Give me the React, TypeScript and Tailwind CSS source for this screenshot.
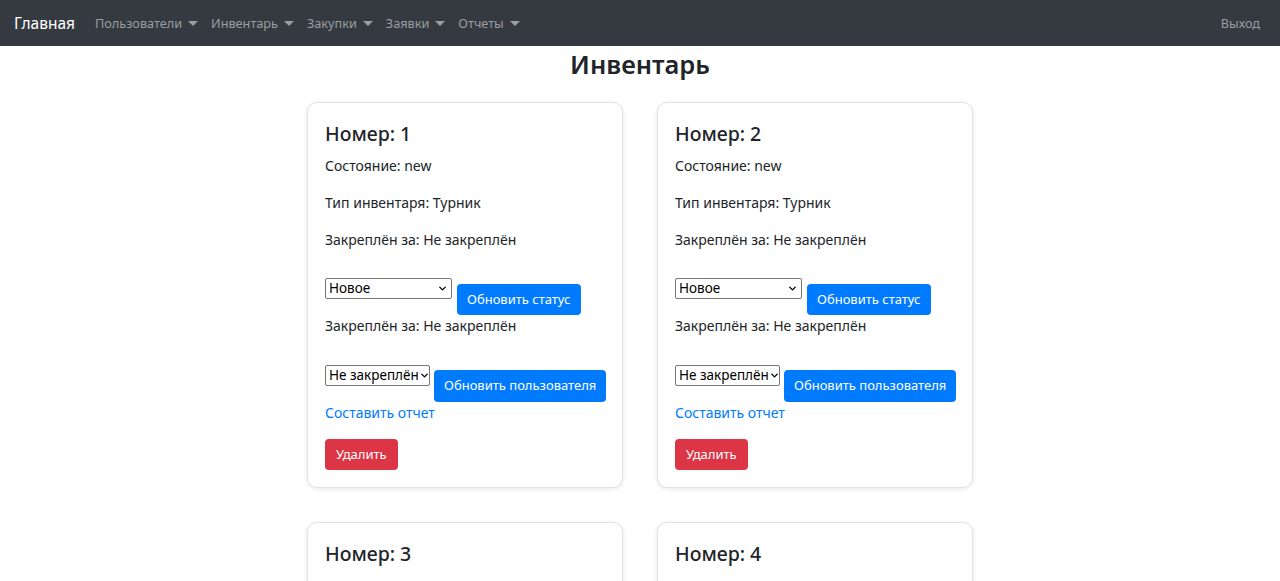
import { ChevronDown } from 'lucide-react';

interface Item {
  id: number;
  state: string;
  type: string;
  owner: string;
}

const items: Item[] = [
  { id: 1, state: 'new', type: 'Турник', owner: 'Не закреплён' },
  { id: 2, state: 'new', type: 'Турник', owner: 'Не закреплён' },
  { id: 3, state: 'new', type: 'Турник', owner: 'Не закреплён' },
  { id: 4, state: 'new', type: 'Турник', owner: 'Не закреплён' },
];

const navLinks = ['Пользователи', 'Инвентарь', 'Закупки', 'Заявки', 'Отчеты'];

function Caret() {
  return (
    <svg width="10" height="6" viewBox="0 0 10 6" className="ml-[6px] mt-[1px]">
      <path d="M0 0 L10 0 L5 5 Z" fill="currentColor" />
    </svg>
  );
}

function FakeSelect({ value, width }: { value: string; width: string }) {
  return (
    <div
      className={`${width} h-[21px] flex items-center justify-between border border-[#767676] rounded-[2px] bg-white pl-[3px] pr-[3px] text-[13.5px] text-black shrink-0 whitespace-nowrap`}
    >
      <span className="leading-none">{value}</span>
      <ChevronDown className="w-[11px] h-[11px] shrink-0" strokeWidth={3} />
    </div>
  );
}

function Card({ item }: { item: Item }) {
  return (
    <div className="bg-white border border-[#e2e2e2] rounded-[10px] shadow-[0_1px_5px_rgba(0,0,0,0.1)] px-[17px] pt-[17px] pb-[17px]">
      <h3 className="text-[19.5px] font-medium leading-[28px] text-[#212529] mb-[7px]">Номер: {item.id}</h3>
      <p className="text-[14px] leading-[21px] mb-[16px]">Состояние: {item.state}</p>
      <p className="text-[14px] leading-[21px] mb-[16px]">Тип инвентаря: {item.type}</p>
      <p className="text-[14px] leading-[21px] mb-[16px]">Закреплён за: {item.owner}</p>
      <div className="flex items-start gap-[5px] pt-[12px]">
        <FakeSelect value="Новое" width="w-[127px]" />
        <button className="mt-[6px] h-[31px] px-[10px] rounded-[4px] bg-[#007bff] text-white text-[13px] whitespace-nowrap">
          Обновить статус
        </button>
      </div>
      <p className="text-[14px] leading-[21px] mb-[16px]">Закреплён за: {item.owner}</p>
      <div className="flex items-start gap-[4px] pt-[13px]">
        <FakeSelect value="Не закреплён" width="w-[105px]" />
        <button className="mt-[5px] h-[32px] px-[10px] rounded-[4px] bg-[#007bff] text-white text-[13px] whitespace-nowrap">
          Обновить пользователя
        </button>
      </div>
      <a href="#" className="block text-[14px] leading-[21px] mb-[16px] text-[#007bff]">
        Составить отчет
      </a>
      <button className="h-[31px] px-[11px] rounded-[4px] bg-[#dc3545] text-white text-[13px]">Удалить</button>
    </div>
  );
}

export default function App() {
  return (
    <div className="min-h-screen bg-white text-[#212529]" style={{ fontFamily: '"Noto Sans", "Open Sans", sans-serif' }}>
      <nav className="h-[46px] bg-[#343a40] flex items-center px-[14px] pt-[1px]">
        <span className="text-[15.5px] text-white mr-[20px]">Главная</span>
        <div className="flex items-center gap-[13px]">
          {navLinks.map((l) => (
            <span key={l} className="flex items-center text-[12.7px] text-[#9a9da0]">
              {l}
              <Caret />
            </span>
          ))}
        </div>
        <span className="ml-auto mr-[6px] text-[12.7px] text-[#9a9da0]">Выход</span>
      </nav>
      <h2 className="text-center text-[25.5px] font-semibold leading-[36px] mb-[20px]">Инвентарь</h2>
      <div className="grid grid-cols-[316px_316px] gap-[34px] justify-center">
        {items.map((it) => (
          <Card key={it.id} item={it} />
        ))}
      </div>
      <div className="h-[40px]" />
    </div>
  );
}
